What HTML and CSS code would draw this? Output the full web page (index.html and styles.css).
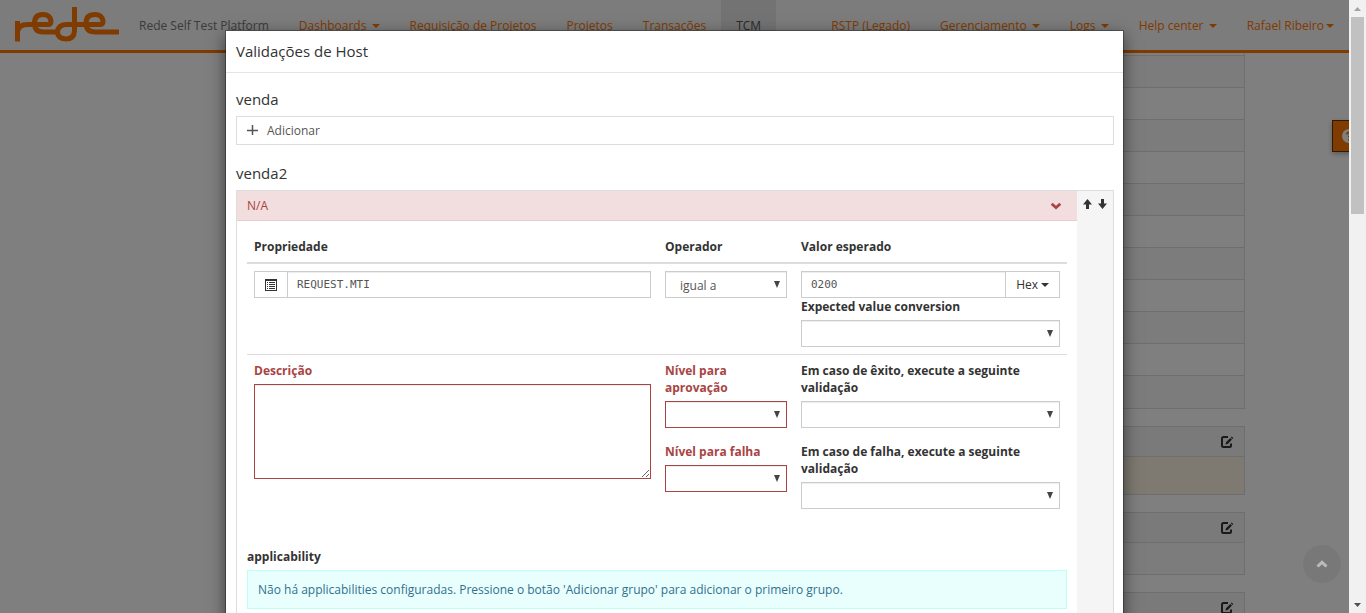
FILE: index.html
```html
<!DOCTYPE html>
<html lang="pt-BR">
<head>
<meta charset="utf-8">
<title>Rede Self Test Platform</title>
<link rel="stylesheet" href="styles.css">
</head>
<body>
<svg class="sprite" aria-hidden="true">
  <symbol id="edit" viewBox="0 0 14 14"><path d="M8 2H3.500Q2 2 2 3.500V10.500Q2 12 3.500 12H9.500Q11 12 11 10.500V8.500" fill="none" stroke="currentColor" stroke-width="2"/><path d="M5.500 9.500L6 7.200L10.300 2.900L12 4.600L7.700 9ZM10.800 2.300L11.700 1.400L13.300 3L12.500 4Z" fill="currentColor"/></symbol>
  <symbol id="chevron" viewBox="0 0 12 8"><path d="M1.700 1.700L6 5.700L10.300 1.700" fill="none" stroke="currentColor" stroke-width="2.800"/></symbol>
  <symbol id="chevron-up" viewBox="0 0 12 8"><path d="M1.500 6.500L6 2.300L10.500 6.500" fill="none" stroke="currentColor" stroke-width="3"/></symbol>
</svg>
<div class="window">
  <div class="viewport">
    <header class="navbar">
      <a class="brand" href="#" aria-label="Rede">
        <svg width="106" height="36" viewBox="4 4 106 36" fill="none" stroke="#ff7600" stroke-width="5" stroke-linejoin="round">
          <path d="M7.500 18V38.500"/>
          <path d="M7.500 29Q8 21.500 18 21.500H38Q41 21.500 41 18Q40 11.500 33 11.500Q24.500 11.500 24.500 20Q24.500 29 33 29H47"/>
          <path d="M64.500 4V28Q64 36 56 36Q47.500 35.500 47.500 29Q48 21.500 57 21.500H90Q93 21.500 93 18Q92 11.500 85 11.500Q76 11.500 76 20Q76 29 85 29H109"/>
        </svg>
      </a>
      <span class="brand-text">Rede Self Test Platform</span>
      <nav class="nav">
        <a href="#">Dashboards <i class="caret"></i></a>
        <a href="#">Requisição de Projetos</a>
        <a href="#">Projetos</a>
        <a href="#">Transações</a>
        <a class="active" href="#">TCM</a>
      </nav>
      <nav class="nav nav-right">
        <a href="#">RSTP (Legado)</a>
        <a href="#">Gerenciamento <i class="caret"></i></a>
        <a href="#">Logs <i class="caret"></i></a>
        <a href="#">Help center <i class="caret"></i></a>
        <a href="#">Rafael Ribeiro<i class="caret"></i></a>
      </nav>
    </header>
    <main class="page">
      <div class="content">
        <ul class="list"><li></li><li></li><li></li><li></li><li></li><li></li><li></li><li></li><li></li><li></li><li></li><li></li></ul>
        <section class="card">
          <header class="card-head"><button type="button" class="plain" aria-label="Editar"><svg width="14" height="14"><use href="#edit"/></svg></button></header>
          <div class="card-body notice"></div>
        </section>
        <section class="card">
          <header class="card-head"><button type="button" class="plain" aria-label="Editar"><svg width="14" height="14"><use href="#edit"/></svg></button></header>
          <div class="card-body"></div>
        </section>
        <section class="card">
          <header class="card-head"><button type="button" class="plain" aria-label="Editar"><svg width="14" height="14"><use href="#edit"/></svg></button></header>
          <div class="card-body"></div>
        </section>
      </div>
    </main>
    <button type="button" class="help" aria-label="Ajuda"><svg width="14" height="14" viewBox="0 0 14 14"><circle cx="7" cy="7" r="7" fill="#fff"/><path d="M5 5.500Q5 3.500 7 3.500T9 5.500Q9 6.500 7 7.500V8.500M7 10V11.500" fill="none" stroke="#ff7600" stroke-width="2"/></svg></button>

    <div class="overlay">
      <div class="modal" role="dialog" aria-labelledby="title">
        <header class="modal-head"><h1 id="title" class="heading">Validações de Host</h1></header>
        <div class="modal-body">
          <section>
            <h2 class="heading">venda</h2>
            <button type="button" class="add"><svg width="11" height="11" viewBox="0 0 11 11"><path d="M5.500 0V10M0 5.500H11" stroke="#555" stroke-width="1.500"/></svg>Adicionar</button>
          </section>
          <section>
            <h2 class="heading">venda2</h2>
            <div class="panel">
              <div class="panel-main">
                <button type="button" class="panel-head"><span>N/A</span><svg width="12" height="8"><use href="#chevron"/></svg></button>
                <div class="panel-body">
                  <table class="grid">
                    <thead><tr><th class="col-prop">Propriedade</th><th class="col-op">Operador</th><th>Valor esperado</th></tr></thead>
                    <tbody>
                      <tr>
                        <td>
                          <div class="group">
                            <button type="button" class="addon" aria-label="Escolher propriedade"><svg width="12" height="12" viewBox="0 0 12 12"><path d="M0 0H12V12H0Z M1 2V11H11V2Z M2 3H3V4H2Z M4 3H10V4H4Z M2 5H3V6H2Z M4 5H10V6H4Z M2 7H3V8H2Z M4 7H10V8H4Z M2 9H3V10H2Z M4 9H10V10H4Z" fill="#333" fill-rule="evenodd"/></svg></button>
                            <input class="field mono" type="text" aria-label="Propriedade" value="REQUEST.MTI">
                          </div>
                        </td>
                        <td><div class="select"><select class="field" aria-label="Operador"><option>igual a</option></select></div></td>
                        <td>
                          <div class="group">
                            <input class="field mono" type="text" aria-label="Valor esperado" value="0200">
                            <button type="button" class="addon hex">Hex<i class="caret"></i></button>
                          </div>
                          <label for="conv">Expected value conversion</label>
                          <div class="select"><select class="field" id="conv"><option></option></select></div>
                        </td>
                      </tr>
                      <tr>
                        <td class="error"><label for="desc">Descrição</label><textarea class="field area" id="desc"></textarea></td>
                        <td class="error">
                          <div class="form-row"><label for="ok">Nível para aprovação</label><div class="select"><select class="field" id="ok"><option></option></select></div></div>
                          <div class="form-row"><label for="fail">Nível para falha</label><div class="select"><select class="field" id="fail"><option></option></select></div></div>
                        </td>
                        <td>
                          <div class="form-row"><label for="nextok">Em caso de êxito, execute a seguinte validação</label><div class="select"><select class="field" id="nextok"><option></option></select></div></div>
                          <div class="form-row"><label for="nextfail">Em caso de falha, execute a seguinte validação</label><div class="select"><select class="field" id="nextfail"><option></option></select></div></div>
                        </td>
                      </tr>
                    </tbody>
                  </table>
                  <h3 class="subheading">applicability</h3>
                  <p class="alert">Não há applicabilities configuradas. Pressione o botão 'Adicionar grupo' para adicionar o primeiro grupo.</p>
                </div>
              </div>
              <div class="panel-side">
                <button type="button" class="plain" aria-label="Mover para cima"><svg width="9" height="10" viewBox="0 0 9 10"><path d="M4.500 0L9 5.500H6V10H3V5.500H0Z" fill="#333"/></svg></button>
                <button type="button" class="plain" aria-label="Mover para baixo"><svg width="9" height="10" viewBox="0 0 9 10"><path d="M4.500 10L9 4.500H6V0H3V4.500H0Z" fill="#333"/></svg></button>
              </div>
            </div>
          </section>
        </div>
      </div>
    </div>
    <button type="button" class="to-top" aria-label="Voltar ao topo"><svg width="12" height="8"><use href="#chevron-up"/></svg></button>
  </div>
  <div class="scrollbar" aria-hidden="true">
    <svg width="17" height="17" viewBox="0 0 17 17"><path d="M5 11L8.500 7L12 11Z" fill="#a3a3a3"/></svg>
    <div class="track"><div class="thumb"></div></div>
    <svg width="17" height="17" viewBox="0 0 17 17"><path d="M5 7L8.500 11L12 7Z" fill="#505050"/></svg>
  </div>
</div>
</body>
</html>
```
FILE: styles.css
```css
* { box-sizing: border-box; }
body { margin: 0; font: 12px/17px "Open Sans", "Noto Sans", sans-serif; color: #333; }
button, select, input, textarea { font: inherit; color: inherit; border-radius: 0; }
svg { display: block; }
.sprite { position: absolute; width: 0; height: 0; }
.plain { border: 0; background: none; padding: 0; }
.window { display: grid; grid-template-columns: 1fr 17px; height: 100vh; }
.viewport { position: relative; overflow: hidden; }

.navbar { position: absolute; inset: 0 0 auto; z-index: 1; display: flex; background: #f8f8f8; border-bottom: 3px solid #ff7600; }
.brand { padding: 7px 5px 7px 14px; }
.brand-text { padding: 17px 15px 16px 14px; color: #777; }
.nav { display: flex; }
.nav a { padding: 17px 15px 16px; color: #ff7600; text-decoration: none; white-space: nowrap; }
.nav a.active { background: #e7e7e7; color: #555; }
.nav-right { margin-left: auto; }
.caret { display: inline-block; margin-left: 2px; vertical-align: 2px; border: 4px solid transparent; border-top-color: currentColor; border-bottom: 0; }

.page { max-width: 1141px; margin: 0 auto; display: grid; grid-template-columns: 1fr 3fr; }
.content { grid-column: 2; }
.list { list-style: none; margin: 23px 0 17px; padding: 0; border: 1px solid #ddd; }
.list li { height: 32px; border-bottom: 1px solid #ddd; }
.list li:nth-child(even) { background: #f9f9f9; }
.list li:last-child { border-bottom: 0; }
.card { margin-bottom: 17px; border: 1px solid #ddd; }
.card-head { display: flex; justify-content: flex-end; padding: 8px 10px 7px; background: #f5f5f5; border-bottom: 1px solid #ddd; }
.card-body { height: 31px; background: #f9f9f9; }
.card-body.notice { height: 37px; background: #fcf5e3; }
.help { position: absolute; top: 120px; right: -16px; padding: 8px 8px 8px 9px; border: 1px solid #663000; background: #ff7600; box-shadow: 0 2px 5px rgba(0,0,0,.3); }

.overlay { position: absolute; inset: 0; z-index: 2; padding: 30px 10px; overflow: hidden; background: rgba(0,0,0,.5); }
.modal { max-width: 899px; margin: 0 auto; background: #fff; background-clip: padding-box; border: 1px solid rgba(0,0,0,.3); box-shadow: 0 5px 15px rgba(0,0,0,.5); }
.modal-head { padding: 10px; border-bottom: 1px solid #e5e5e5; }
.modal-head .heading { margin: 2px 0; }
.heading { margin: 0 0 8px; font-size: 15px; font-weight: 400; line-height: 17px; }
.modal-body { display: grid; gap: 20px; padding: 18px 9px 18px 10px; }
.add { display: flex; align-items: center; gap: 9px; width: 100%; padding: 5px 10px; border: 1px solid #ddd; background: #fff; color: #555; }
.panel { display: flex; border: 1px solid #ddd; }
.panel-main { flex: 1; min-width: 0; }
.panel-head { display: flex; align-items: center; justify-content: space-between; width: 100%; padding: 6px 15px 6px 10px; border: 0; border-bottom: 1px solid #ebccd1; background: #f2dede; color: #a94442; }
.panel-side { width: 36px; display: flex; justify-content: center; align-items: flex-start; gap: 6px; padding-top: 8px; background: #f5f5f5; }
.panel-body { padding: 10px; }
.grid { width: 100%; table-layout: fixed; border-collapse: separate; border-spacing: 0; margin-bottom: 17px; }
.col-prop { width: 411px; }
.col-op { width: 136px; }
.grid th { padding: 7px; text-align: left; border-bottom: 2px solid #ddd; }
.grid td { padding: 7px; vertical-align: top; }
.grid tbody tr + tr td { border-top: 1px solid #ddd; }
label { display: block; margin-bottom: 5px; font-weight: 700; }
.form-row { margin-bottom: 15px; }
.group { display: flex; }
.field { display: block; width: 100%; height: 27px; padding: 4px 10px; border: 1px solid #ccc; background: #fff; color: #555; box-shadow: inset 0 1px 1px rgba(0,0,0,.075); appearance: none; }
.group .field { flex: 1; min-width: 0; }
.mono { padding: 4px 9px; font-family: "DejaVu Sans Mono", monospace; font-size: 11px; }
.addon { display: flex; align-items: center; padding: 0 10px; border: 1px solid #ccc; background: #fff; }
.addon:first-child { border-right: 0; }
.addon:last-child { border-left: 0; }
.hex .caret { margin-left: 3px; }
.select { position: relative; }
.select .field { padding: 5px 14px 3px; }
.select::after { content: ""; position: absolute; right: 7px; top: 10px; width: 6px; height: 7px; background: #444; clip-path: polygon(0 0, 100% 0, 50% 100%); pointer-events: none; }
.error { color: #a94442; }
.error .field { border-color: #a94442; }
textarea.area { height: 95px; resize: vertical; }
.subheading { margin: 0 0 5px; font-size: 12px; line-height: 17px; }
.alert { margin: 0; padding: 10px; border: 1px solid #bcfff4; background: #e8fffe; color: #31708f; }

.to-top { position: absolute; z-index: 3; right: 8px; bottom: 30px; width: 38px; height: 38px; display: grid; place-items: center; padding: 0; border: 0; border-radius: 50%; background: rgba(0,0,0,.05); color: #bbb; }
.scrollbar { display: flex; flex-direction: column; background: #f1f1f1; }
.track { flex: 1; padding: 0 2px; }
.thumb { height: 34%; background: #c1c1c1; }
```
